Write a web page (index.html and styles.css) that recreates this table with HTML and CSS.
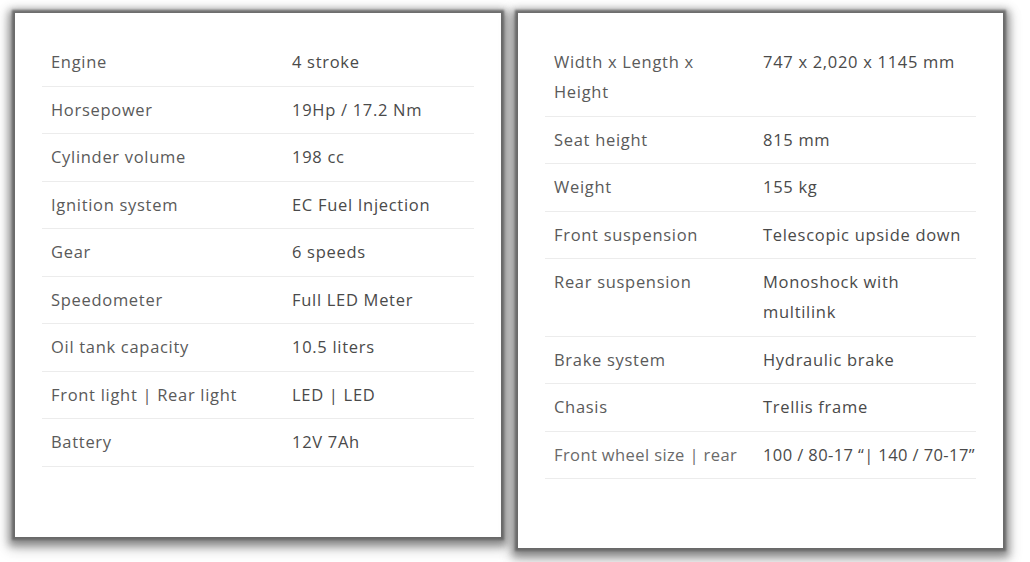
FILE: index.html
```html
<!DOCTYPE html>
<html lang="en">
<head>
<meta charset="utf-8">
<title>Specifications</title>
<link rel="stylesheet" href="styles.css">
</head>
<body>
<div class="cards">
  <section class="card card-left">
    <table class="spec">
      <colgroup><col class="c1-left"><col></colgroup>
      <tr><td class="lbl">Engine</td><td class="val">4 stroke</td></tr>
      <tr><td class="lbl">Horsepower</td><td class="val">19Hp / 17.2 Nm</td></tr>
      <tr><td class="lbl">Cylinder volume</td><td class="val">198 cc</td></tr>
      <tr><td class="lbl">Ignition system</td><td class="val">EC Fuel Injection</td></tr>
      <tr><td class="lbl">Gear</td><td class="val">6 speeds</td></tr>
      <tr><td class="lbl">Speedometer</td><td class="val">Full LED Meter</td></tr>
      <tr><td class="lbl">Oil tank capacity</td><td class="val">10.5 liters</td></tr>
      <tr><td class="lbl">Front light | Rear light</td><td class="val">LED | LED</td></tr>
      <tr><td class="lbl">Battery</td><td class="val">12V 7Ah</td></tr>
    </table>
  </section>
  <section class="card card-right">
    <table class="spec">
      <colgroup><col class="c1-right"><col></colgroup>
      <tr><td class="lbl">Width x Length x Height</td><td class="val">747 x 2,020 x 1145 mm</td></tr>
      <tr><td class="lbl">Seat height</td><td class="val">815 mm</td></tr>
      <tr><td class="lbl">Weight</td><td class="val">155 kg</td></tr>
      <tr><td class="lbl">Front suspension</td><td class="val">Telescopic upside down</td></tr>
      <tr><td class="lbl">Rear suspension</td><td class="val">Monoshock with multilink</td></tr>
      <tr><td class="lbl">Brake system</td><td class="val">Hydraulic brake</td></tr>
      <tr><td class="lbl">Chasis</td><td class="val">Trellis frame</td></tr>
      <tr><td class="lbl nowrap lighter">Front wheel size | rear</td><td class="val nowrap">100 / 80-17 “| 140 / 70-17”</td></tr>
    </table>
  </section>
</div>
</body>
</html>
```

FILE: styles.css
```css
html, body {
  margin: 0;
  padding: 0;
  background: #ffffff;
}

body {
  min-height: 562px;
  font-family: "Open Sans", "Liberation Sans", sans-serif;
  font-size: 16.5px;
  letter-spacing: 0.7px;
}

.cards {
  display: flex;
  align-items: flex-start;
  gap: 17px;
  padding: 13px 0 0 15px;
}

.card {
  background: #ffffff;
  box-sizing: border-box;
  padding: 26px 27px;
  box-shadow: 0 0 2px 3px rgba(100, 100, 100, 0.85),
              0 3px 8px 6px rgba(80, 80, 80, 0.6),
              0 6px 14px 6px rgba(0, 0, 0, 0.15);
}

.card-left {
  width: 486px;
  height: 524px;
}

.card-right {
  width: 485px;
  height: 535px;
}

.spec {
  width: 100%;
  border-collapse: collapse;
  table-layout: fixed;
}

.c1-left { width: 241px; }
.c1-right { width: 209px; }

.spec td {
  padding: 8.25px 9px;
  line-height: 30px;
  vertical-align: top;
  border-bottom: 1px solid #ececec;
}

.lbl { color: #5a5a5a; }
.val { color: #4a4a4a; }
.lighter { color: #6a6a6a; }
.nowrap { white-space: nowrap; letter-spacing: 0.4px; }
```
